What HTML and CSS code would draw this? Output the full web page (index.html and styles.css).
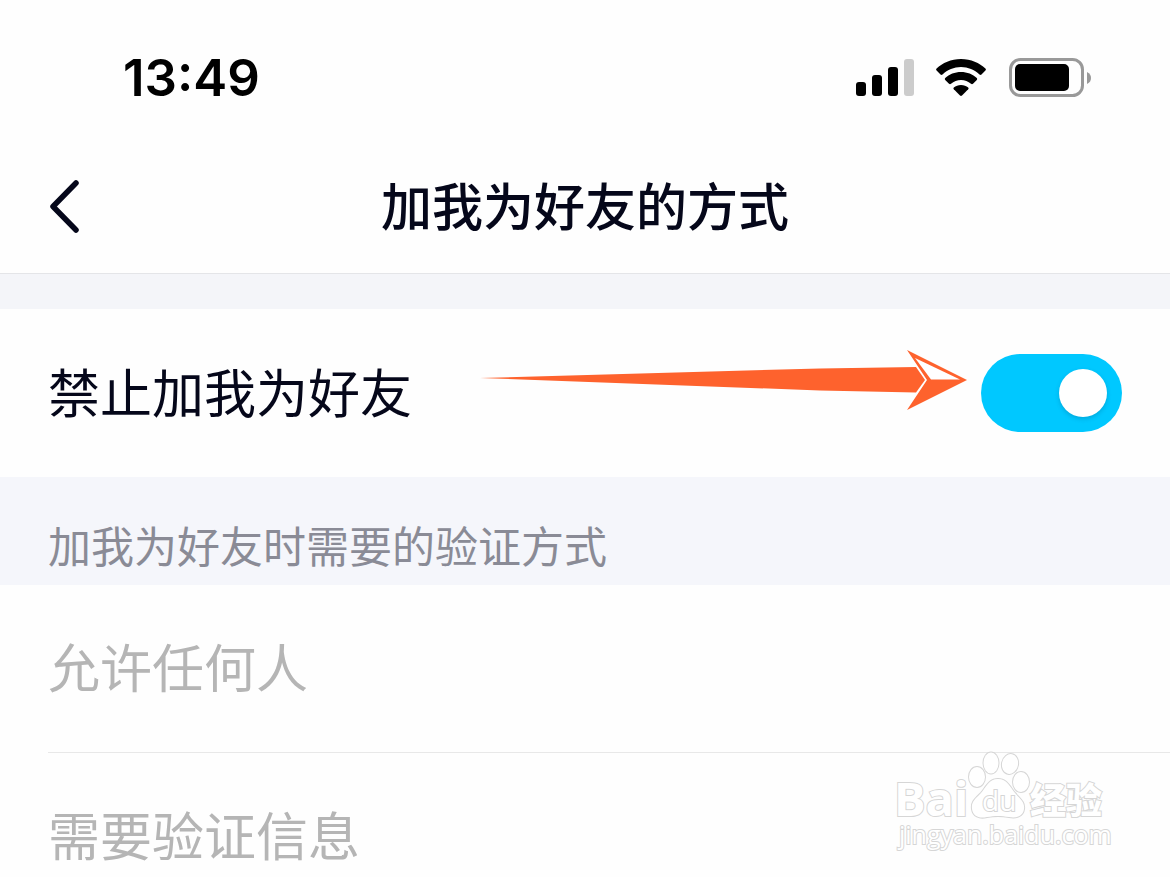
FILE: index.html
```html
<!DOCTYPE html>
<html lang="zh-CN">
<head>
<meta charset="utf-8">
<meta name="viewport" content="width=device-width, initial-scale=1">
<title>加我为好友的方式</title>
<link rel="stylesheet" href="styles.css">
</head>
<body>
<div class="screen">
  <div class="status-bar">
    <time class="clock">13:49</time>
    <div class="status-icons">
      <svg width="58" height="38" viewBox="0 0 58 38" aria-hidden="true">
        <rect x="0" y="23" width="10" height="14" rx="3"/>
        <rect x="16" y="16" width="10" height="21" rx="3"/>
        <rect x="32" y="8" width="10" height="29" rx="3"/>
        <rect x="48" y="0" width="10" height="37" rx="3" fill="#ccc"/>
      </svg>
      <svg width="50" height="38" viewBox="0 0 50 38" aria-hidden="true">
        <path d="M25 0C15 0 6.500 4 .6 9.500q-1 1 0 2L4.500 15.500q1 .8 2 0C11.500 10.800 18 8 25 8s13.500 2.800 18.500 7.500q1 .8 2 0L49.400 11.500q1-1 0-2C43.500 4 35 0 25 0Z"/>
        <path d="M25 13C18.800 13 13.200 15.200 9.200 19q-.9 1 0 2L13 24.800q1 .8 2 0C17.800 22.400 21.200 21 25 21s7.200 1.400 10 3.800q1 .8 2 0L40.800 21q.9-1 0-2C36.800 15.200 31.200 13 25 13Z"/>
        <path d="M25 26C22.200 26 19.700 26.900 17.800 28.400q-.9.900 0 1.900L24 36.600q1 .9 2 0l6.200-6.300q.9-1 0-1.900C30.300 26.900 27.800 26 25 26Z"/>
      </svg>
      <svg width="84" height="40" viewBox="0 0 84 40" aria-hidden="true">
        <rect x="2.500" y="1.500" width="72" height="36" rx="10" fill="none" stroke="#999" stroke-width="3"/>
        <rect x="7" y="6" width="54" height="27" rx="5"/>
        <path d="M79 14c3 1.500 4 3.500 4 6s-1 4.500-4 6Z" fill="#999"/>
      </svg>
    </div>
  </div>

  <header class="nav">
    <button class="back" type="button" aria-label="返回">
      <svg width="32" height="54" viewBox="0 0 32 54" aria-hidden="true">
        <path d="M28 3 5 26.500l23 23.500" fill="none" stroke="currentColor" stroke-width="5.500" stroke-linecap="round" stroke-linejoin="round"/>
      </svg>
    </button>
    <h1 class="title">加我为好友的方式</h1>
  </header>

  <main>
    <div class="row switch-row">
      <label class="row-label" for="block">禁止加我为好友</label>
      <input class="switch" id="block" type="checkbox" role="switch" checked>
      <svg class="arrow" width="488" height="60" viewBox="0 0 488 60" aria-hidden="true">
        <path d="M0 28 340 18.500 436 17 445 30 436 42.500 340 40.500Z" fill="#fe622d"/>
        <path d="M427 0 487 30 427 60 447 30Z" fill="#fe622d"/>
        <path d="M435 8 480 29.500H451Z" fill="#fff"/>
      </svg>
    </div>
    <h2 class="section">加我为好友时需要的验证方式</h2>
    <ul class="options">
      <li class="row option">允许任何人</li>
      <li class="row option">需要验证信息</li>
    </ul>
  </main>

  <svg class="watermark" width="220" height="104" viewBox="-4 0 220 104" role="img" aria-label="Baidu 经验">
    <g class="mark">
      <ellipse cx="81" cy="26" rx="8" ry="10"/>
      <ellipse cx="95" cy="12" rx="7.500" ry="10.500"/>
      <ellipse cx="114" cy="13" rx="8" ry="10" transform="rotate(12 114 13)"/>
      <ellipse cx="125" cy="31" rx="8" ry="10"/>
      <path d="M102 28C93 28 90 36 85 42c-6 6-10 9-9 16 1 7 7 10 15 8 8-1.500 14-1.500 22 0 8 1.500 14-1 15-8 1-7-4-10-9-16C114 36 111 28 102 28Z"/>
      <text class="logo-text" x="-2" y="65">Bai</text>
      <text class="du-text" x="86" y="60">du</text>
      <text class="cjk-text" x="134" y="63">经验</text>
      <text class="url-text" x="3" y="93">jingyan.baidu.com</text>
    </g>
  </svg>
</div>
</body>
</html>
```
FILE: styles.css
```css
* {
  box-sizing: border-box;
}

body {
  margin: 0;
  background: #fefefe;
  color: #05071a;
  font-family: "Noto Sans CJK SC", sans-serif;
}

.screen {
  position: relative;
  height: 100vh;
  overflow: hidden;
}

.status-bar {
  display: flex;
  align-items: center;
  justify-content: space-between;
  height: 156px;
  padding: 0 78px 0 123px;
}

.clock {
  color: #000;
  font: 600 51px/60px Inter, sans-serif;
}

.status-icons {
  display: flex;
  align-items: center;
  gap: 22px;
}

.nav {
  display: grid;
  grid-template-columns: 80px 1fr 80px;
  align-items: center;
  padding: 0 0 15px;
  border-bottom: 1px solid #e4e5e8;
}

.back {
  display: flex;
  padding: 0 0 0 48px;
  border: 0;
  background: none;
  color: #05071a;
}

.title {
  margin: 0;
  padding-bottom: 6px;
  font-size: 51px;
  font-weight: 500;
  line-height: 96px;
  text-align: center;
}

main {
  border-top: 35px solid #f4f5f9;
}

.row {
  display: flex;
  align-items: center;
  height: 168px;
  font-size: 52px;
  font-weight: 400;
}

.switch-row {
  position: relative;
  justify-content: space-between;
  padding: 0 48px;
}

.row-label {
  padding-bottom: 6px;
}

.switch {
  display: flex;
  align-items: center;
  justify-content: flex-end;
  width: 141px;
  height: 78px;
  margin: 0;
  padding: 0 15px;
  border-radius: 39px;
  background: #ccc;
  appearance: none;
}

.switch:checked {
  background: #00c8ff;
}

.switch::before {
  content: "";
  width: 48px;
  height: 48px;
  border-radius: 50%;
  background: #fff;
  box-shadow: 0 2px 4px rgba(0, 80, 120, 0.25);
}

.arrow {
  position: absolute;
  top: 41px;
  right: 202px;
}

.section {
  margin: 0;
  padding: 35px 48px 9px;
  background: #f5f6fb;
  color: #8a8b96;
  font-size: 43px;
  font-weight: 400;
  line-height: 64px;
}

.options {
  margin: 0;
  padding: 0 0 0 48px;
  list-style: none;
}

.option {
  padding-bottom: 6px;
  border-bottom: 1px solid #e8e8e8;
  color: #b5b5b5;
}

.watermark {
  position: absolute;
  right: 58px;
  bottom: 22px;
}

.mark {
  fill: #fff;
  stroke: #d6d6d6;
  stroke-width: 2;
  paint-order: stroke;
}

.logo-text {
  font: 700 47px "Open Sans", sans-serif;
}

.du-text {
  font: 400 28px "Open Sans", sans-serif;
}

.cjk-text {
  font: 900 36px "Noto Sans CJK SC", sans-serif;
}

.url-text {
  font: 400 25px "Open Sans", sans-serif;
}
```
